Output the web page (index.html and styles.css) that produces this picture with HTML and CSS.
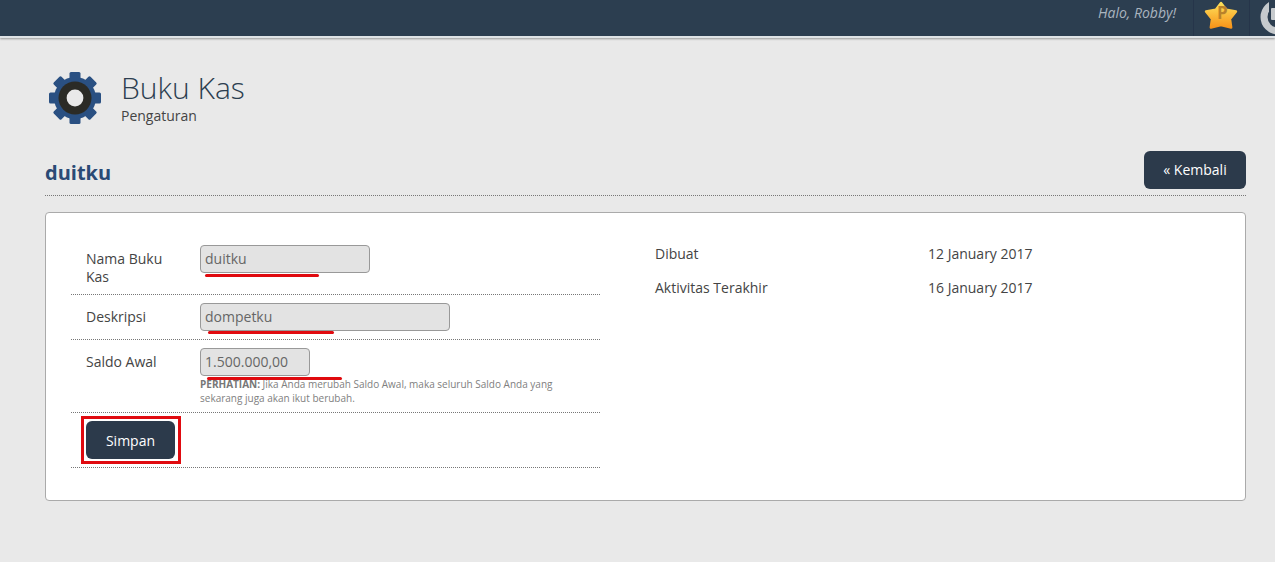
FILE: index.html
```html
<!DOCTYPE html>
<html lang="id">
<head>
<meta charset="utf-8">
<title>Buku Kas</title>
<link rel="stylesheet" href="styles.css">
</head>
<body>
<header class="topbar">
  <span class="greeting">Halo, Robby!</span>
  <div class="top-cell star-cell">
    <svg class="star" viewBox="0 0 34 30" width="34" height="30">
      <defs>
        <linearGradient id="starFill" x1="0" y1="0" x2="0" y2="1">
          <stop offset="0" stop-color="#fde05a"/>
          <stop offset="1" stop-color="#f8941a"/>
        </linearGradient>
      </defs>
      <path d="M17 2 L22.2 8.8 L32 10.5 L26 18 L27.2 26.5 L17 24 L6.8 26.5 L8 18 L2 10.5 L11.8 8.8 Z" fill="url(#starFill)" stroke="url(#starFill)" stroke-width="2.4" stroke-linejoin="round"/>
    </svg>
    <span class="star-letter">P</span>
  </div>
  <div class="top-cell power-cell">
    <svg viewBox="0 0 26 36" width="26" height="36">
      <circle cx="28" cy="17" r="14" fill="none" stroke="#c6cacd" stroke-width="7"/>
      <rect x="19" y="0" width="7" height="22" fill="#2c3e50"/>
      <rect x="21" y="8" width="5" height="12" rx="1" fill="#c6cacd"/>
    </svg>
  </div>
</header>

<main class="page">
  <section class="page-head">
    <svg class="gear" viewBox="0 0 54 54" width="54" height="54">
      <g fill="#2a5082">
        <circle cx="27" cy="27" r="21"/>
        <rect x="21.5" y="1" width="11" height="52" rx="1.5"/>
        <rect x="21.5" y="1" width="11" height="52" rx="1.5" transform="rotate(45 27 27)"/>
        <rect x="21.5" y="1" width="11" height="52" rx="1.5" transform="rotate(90 27 27)"/>
        <rect x="21.5" y="1" width="11" height="52" rx="1.5" transform="rotate(135 27 27)"/>
      </g>
      <circle cx="27" cy="27" r="16.5" fill="#2b2b26"/>
      <circle cx="27" cy="27" r="8.4" fill="#e9e9e9"/>
    </svg>
    <div>
      <h1 class="app-title">Buku Kas</h1>
      <p class="app-sub">Pengaturan</p>
    </div>
  </section>

  <section class="section-head">
    <h2 class="section-title">duitku</h2>
    <a class="btn btn-back" href="#">« Kembali</a>
  </section>

  <section class="card">
    <form class="form-col">
      <div class="row row-name">
        <label class="label">Nama Buku Kas</label>
        <div class="field">
          <input class="input input-m" value="duitku">
          <span class="mark mark-1"></span>
        </div>
      </div>
      <div class="row row-desc">
        <label class="label">Deskripsi</label>
        <div class="field">
          <input class="input input-l" value="dompetku">
          <span class="mark mark-2"></span>
        </div>
      </div>
      <div class="row row-saldo">
        <label class="label">Saldo Awal</label>
        <div class="field">
          <input class="input input-s" value="1.500.000,00">
          <span class="mark mark-3"></span>
          <p class="hint"><b>PERHATIAN:</b> Jika Anda merubah Saldo Awal, maka seluruh Saldo Anda yang sekarang juga akan ikut berubah.</p>
        </div>
      </div>
      <div class="row row-action">
        <span class="red-box"><button class="btn btn-save" type="button">Simpan</button></span>
      </div>
    </form>
    <dl class="info">
      <dt>Dibuat</dt><dd>12 January 2017</dd>
      <dt>Aktivitas Terakhir</dt><dd>16 January 2017</dd>
    </dl>
  </section>
</main>
</body>
</html>
```

FILE: styles.css
```css
* { box-sizing: border-box; }
html, body { margin: 0; height: 100%; }
body {
  background: #e9e9e9;
  color: #444;
  font-family: "Open Sans", "Liberation Sans", sans-serif;
  font-size: 14px;
  overflow: hidden;
}
.topbar {
  display: flex;
  justify-content: flex-end;
  align-items: stretch;
  height: 38px;
  background: #2c3e50;
  border-bottom: 2px solid #dfe3e6;
  box-shadow: 0 1px 2px #999;
}
.greeting {
  color: #a9b4bf;
  font-style: italic;
  font-size: 14px;
  line-height: 25px;
  margin-right: 17px;
}
.top-cell { position: relative; border-left: 1px solid #26354a; height: 36px; }
.star-cell { width: 56px; }
.star { position: absolute; left: 10px; top: 1px; }
.star-letter {
  position: absolute;
  left: 23px;
  top: 3px;
  color: #b9822a;
  font-weight: 700;
  font-size: 17px;
  line-height: 20px;
}
.power-cell { width: 26px; overflow: hidden; }
.page { padding: 0 29px 0 45px; }
.page-head { display: flex; align-items: flex-start; padding: 31px 0 0 3px; height: 113px; }
.gear { margin: 2px 19px 0 0; flex: none; }
.app-title {
  margin: 0;
  font-weight: 300;
  font-size: 30px;
  line-height: 38px;
  color: #2c3e50;
}
.app-sub { margin: 1px 0 0; font-size: 14px; line-height: 16px; color: #444; }
.section-head {
  display: flex;
  justify-content: space-between;
  align-items: flex-start;
  height: 45px;
  border-bottom: 1px dotted #777;
}
.section-title {
  margin: 8px 0 0;
  font-size: 20px;
  line-height: 27px;
  font-weight: 700;
  color: #2a4a75;
}
.btn {
  display: block;
  background: #2c3a4b;
  color: #fff;
  border: 0;
  border-radius: 6px;
  font: 14px/38px "Open Sans", "Liberation Sans", sans-serif;
  text-align: center;
  text-decoration: none;
  height: 38px;
}
.btn-back { width: 102px; }
.card {
  display: flex;
  margin-top: 16px;
  height: 289px;
  padding: 21px 0 0 25px;
  background: #fff;
  border: 1px solid #aaa;
  border-radius: 4px;
}
.form-col { width: 529px; flex: none; }
.row {
  display: flex;
  padding-left: 15px;
  border-bottom: 1px dotted #777;
}
.row-name { height: 61px; padding-top: 11px; }
.row-desc { height: 45px; padding-top: 8px; }
.row-saldo { height: 73px; padding-top: 8px; }
.row-action { height: 55px; padding: 3px 0 0 10px; }
.label {
  width: 114px;
  flex: none;
  padding-right: 30px;
  line-height: 18px;
  margin-top: 5px;
  color: #444;
}
.field { position: relative; flex: 1; }
.input {
  display: block;
  height: 28px;
  padding: 0 4px 2px;
  background: #e3e3e3;
  border: 1px solid #999;
  border-radius: 4px;
  color: #666;
  font: 14px "Open Sans", "Liberation Sans", sans-serif;
}
.input-m { width: 170px; }
.input-l { width: 250px; }
.input-s { width: 110px; }
.mark {
  position: absolute;
  height: 3px;
  background: #e00a0f;
  border-radius: 2px;
}
.mark-1 { left: 5px; top: 29px; width: 114px; }
.mark-2 { left: 8px; top: 28px; width: 126px; }
.mark-3 { left: 7px; top: 29px; width: 135px; }
.hint {
  margin: 1px 0 0;
  width: 370px;
  font-size: 10px;
  line-height: 14px;
  color: #808080;
}
.hint b { color: #777; }
.red-box {
  display: block;
  width: 100px;
  height: 48px;
  padding: 2px;
  border: 3px solid #e00a0f;
  background: #fff;
}
.btn-save { width: 89px; }
.info {
  display: grid;
  grid-template-columns: 273px auto;
  grid-auto-rows: 34px;
  margin: 0 0 0 55px;
  padding-top: 0;
  align-content: start;
}
.info dt, .info dd { margin: 0; line-height: 40px; height: 34px; color: #444; }
```
